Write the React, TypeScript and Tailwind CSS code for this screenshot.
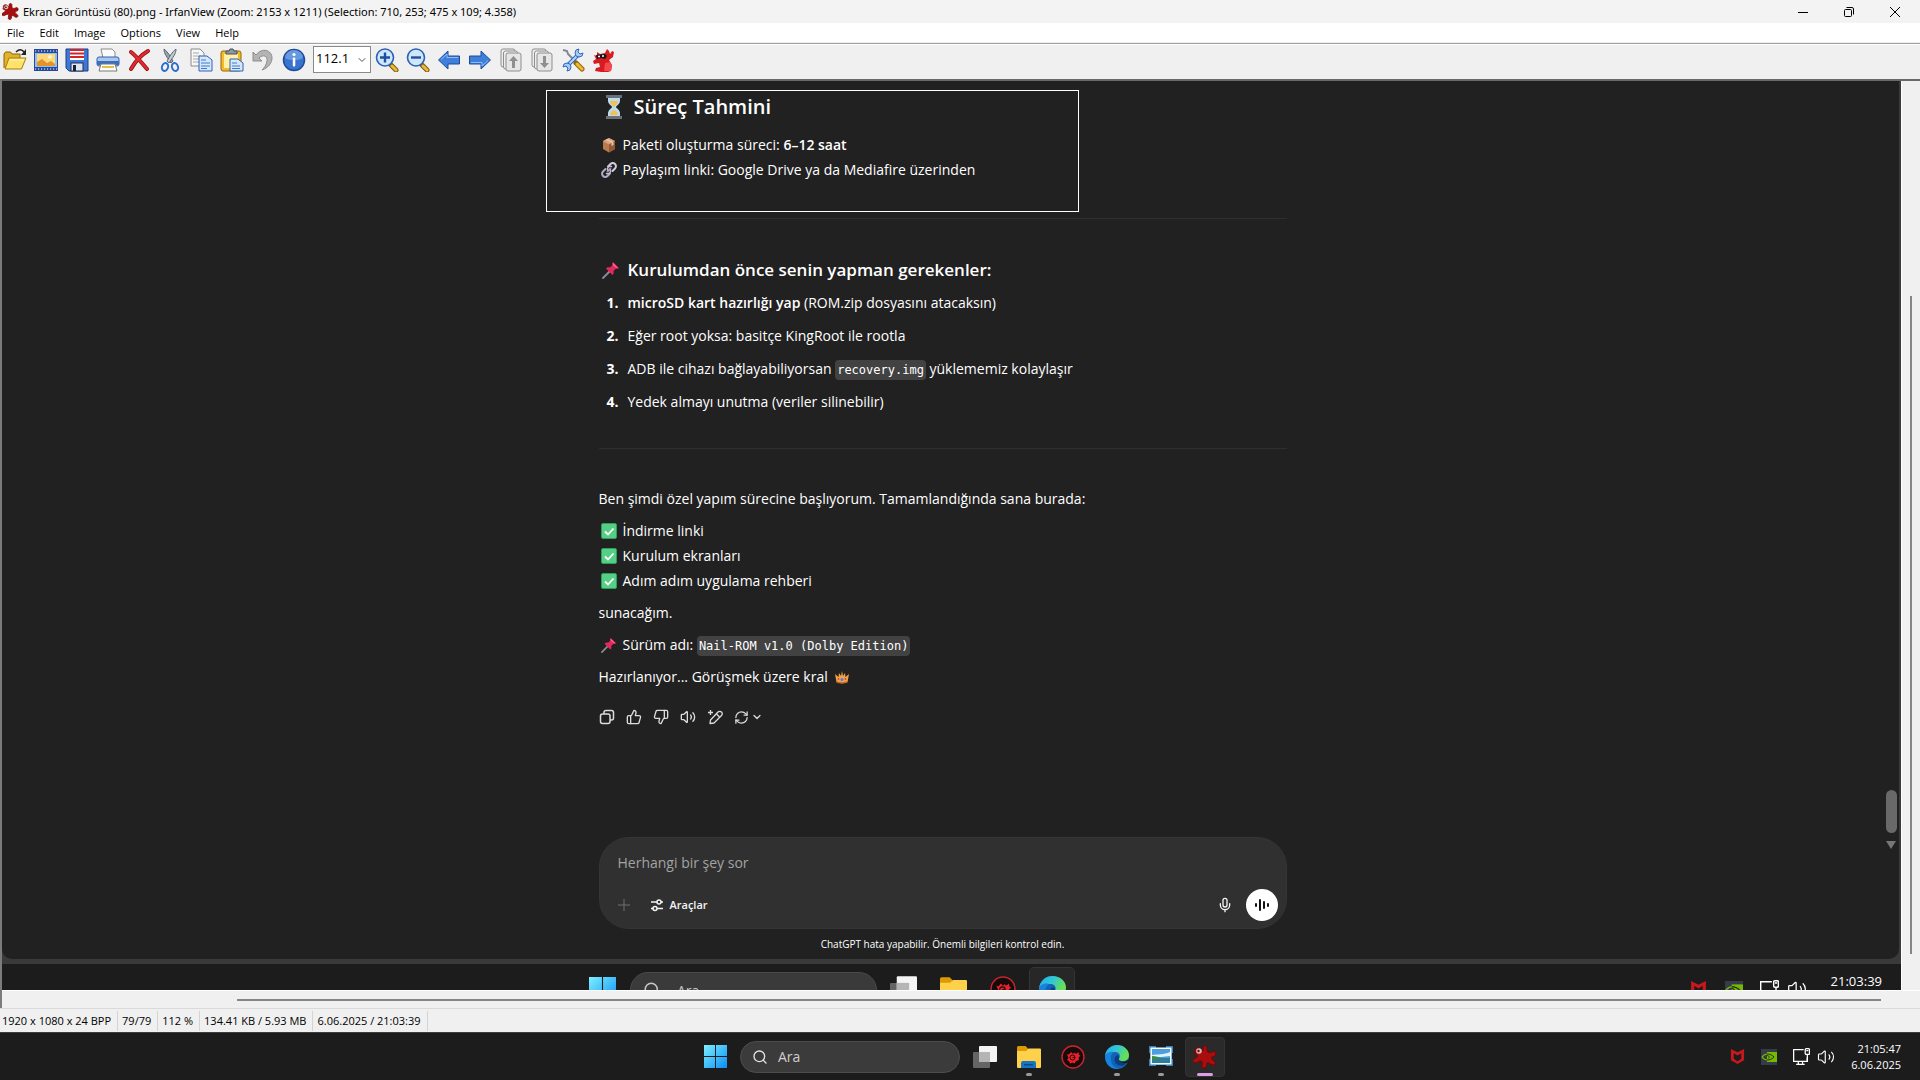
import React, { useId, useState } from 'react';
import { ChevronDown, Mic, RefreshCw, Search, ThumbsDown, ThumbsUp, Volume2 } from 'lucide-react';

/* ---------- toolbar icons ---------- */

const OpenIcon = () => (
  <svg viewBox="0 0 24 24" className="h-6 w-6">
    <path d="M1 20V6l1.500-2h5L9 6h8v4" fill="#e2b22c" stroke="#8a6508" />
    <path d="M2 21 6 10h17l-4.500 11z" fill="#ffe26b" stroke="#a67c0a" />
    <path d="M7 12h14" stroke="#fff6c2" />
    <path d="M13 4c3-3 6-3 8 0" fill="none" stroke="#222" strokeWidth="1.500" />
    <path d="M23 1v6h-5z" fill="#222" />
  </svg>
);

const SlideshowIcon = () => (
  <svg viewBox="0 0 24 24" className="h-6 w-6">
    <rect x="0" y="1" width="24" height="22" fill="#26479a" />
    <path d="M1 3h23M1 21h23" stroke="#fff" strokeWidth="1.200" strokeDasharray="1.200 1.800" />
    <rect x="1" y="5" width="22" height="14" fill="#8ec1ee" />
    <rect x="3" y="6" width="18" height="12" fill="#ffd77a" />
    <circle cx="16" cy="9" r="2" fill="#fff7c4" />
    <path d="M3 18v-4l5-3 5 4 4-2 4 3v2z" fill="#e0942a" />
  </svg>
);

const SaveIcon = () => (
  <svg viewBox="0 0 24 24" className="h-6 w-6">
    <path d="M1 1h22v22H4l-3-3z" fill="#3d78d4" stroke="#1d3f86" />
    <rect x="5" y="1" width="14" height="11" fill="#fff" />
    <path d="M5 2h14M5 5.500h14M5 9h14" stroke="#d3242c" strokeWidth="1.800" />
    <rect x="6" y="15" width="12" height="8" fill="#dfe5ee" stroke="#1c2f55" />
    <rect x="8" y="17" width="3" height="6" fill="#1c2233" />
  </svg>
);

const PrintIcon = () => (
  <svg viewBox="0 0 24 24" className="h-6 w-6">
    <path d="M7 10 5 1h11l3 3v6z" fill="#fafafa" stroke="#8b8b8b" />
    <rect x="1" y="9" width="22" height="9" rx="2" fill="#a9c7f1" stroke="#3563ac" />
    <path d="M1 13h22v4H1z" fill="#3b6fc0" />
    <path d="M5 16h14l2 7H3z" fill="#fff" stroke="#7a7a7a" />
    <path d="M6 19h12" stroke="#e2c04a" strokeWidth="2" />
  </svg>
);

const DeleteIcon = () => (
  <svg viewBox="0 0 24 24" className="h-6 w-6" fill="none" strokeLinecap="round">
    <path d="M4 4c5 4 11 11 16 17M21 3C14 7 8 14 4 21" stroke="#8f1014" strokeWidth="4" />
    <path d="M4 4c5 4 11 11 16 17M21 3C14 7 8 14 4 21" stroke="#e02a30" strokeWidth="2.500" />
  </svg>
);

const CutIcon = () => (
  <svg viewBox="0 0 24 24" className="h-6 w-6">
    <path d="M6 1c0 5 3 8 7 14l2-2C12 8 10 4 6 1z" fill="#9aa3ad" stroke="#5e6872" />
    <path d="M18 1c0 5-3 8-7 14l-2-2c3-5 5-9 9-12z" fill="#c2c9d0" stroke="#5e6872" />
    <ellipse cx="7" cy="19" rx="3" ry="4" fill="none" stroke="#2f6fd0" strokeWidth="2" transform="rotate(20 7 19)" />
    <ellipse cx="17" cy="19" rx="3" ry="4" fill="none" stroke="#2f6fd0" strokeWidth="2" transform="rotate(-20 17 19)" />
  </svg>
);

const CopyPagesIcon = () => (
  <svg viewBox="0 0 24 24" className="h-6 w-6">
    <path d="M2 1h9l4 4v13H2z" fill="#f7f7f7" stroke="#8a8a8a" />
    <path d="M4 5h6M4 8h8M4 11h8M4 14h8" stroke="#a8a8a8" />
    <path d="M10 8h8l5 4v11H10z" fill="#d6e7fb" stroke="#2c62b5" />
    <path d="M12 12h5M12 15h9M12 18h9M12 20.500h6" stroke="#3f7bd0" />
  </svg>
);

const PasteIcon = () => (
  <svg viewBox="0 0 24 24" className="h-6 w-6">
    <rect x="1" y="3" width="20" height="20" rx="2" fill="#f3b92f" stroke="#94690a" />
    <rect x="4" y="6" width="14" height="14" fill="#fff1a8" />
    <path d="M6 6V3h3l1-2h3l1 2h3v3z" fill="#8d98a5" stroke="#48515c" />
    <path d="M10 11h8l5 4v8H10z" fill="#d6e7fb" stroke="#2c62b5" />
    <path d="M12 15h5M12 18h8M12 20.500h8" stroke="#3f7bd0" />
  </svg>
);

const UndoIcon = () => (
  <svg viewBox="0 0 24 24" className="h-6 w-6">
    <path d="M2 4v9h9l-3-3c4-4 9-2 8 3-.500 4-3 7-5 9 6-2 10-7 10-12C21 2 11-1 5 7z" fill="#b4b4b4" stroke="#8c8c8c" />
  </svg>
);

const InfoIcon = () => (
  <svg viewBox="0 0 24 24" className="h-6 w-6">
    <circle cx="12" cy="12" r="10.500" fill="#3674cf" stroke="#1e4a96" strokeWidth="1.500" />
    <path d="M3 10a9 8 0 0 1 18 0c-5 3-13 3-18 0z" fill="#6699e0" />
    <circle cx="12" cy="6.500" r="1.600" fill="#fff" />
    <rect x="10.800" y="9.500" width="2.500" height="9" rx="1" fill="#fff" />
  </svg>
);

const ZoomIcon = ({ plus = false }: { plus?: boolean }) => (
  <svg viewBox="0 0 24 24" className="h-6 w-6">
    <path d="m16 17 5 5" stroke="#7a5b12" strokeWidth="5" strokeLinecap="round" />
    <path d="m17 18 4 4" stroke="#e9b93a" strokeWidth="3" strokeLinecap="round" />
    <circle cx="10" cy="9.500" r="8.500" fill="#cfe6fd" stroke="#2c62b5" strokeWidth="1.600" />
    <path d={plus ? 'M5 9.500h10M10 4.500v10' : 'M5 9.500h10'} stroke="#1d4f9f" strokeWidth="2.400" />
  </svg>
);

const ArrowIcon = ({ right = false }: { right?: boolean }) => (
  <svg viewBox="0 0 24 24" className={right ? 'h-6 w-6 rotate-180' : 'h-6 w-6'}>
    <path d="M1.500 12 11 3v5h11.500v8H11v5z" fill="#3f7fdc" stroke="#1f4a99" strokeLinejoin="round" />
    <path d="M4 11.500 10 6v3.500h11" fill="none" stroke="#8fbcf5" />
  </svg>
);

const PagesIcon = ({ down = false }: { down?: boolean }) => (
  <svg viewBox="0 0 24 24" className="h-6 w-6">
    <rect x="2" y="1" width="14" height="18" rx="2" fill="#eee" stroke="#8e8e8e" />
    <rect x="4.500" y="3" width="14" height="18" rx="2" fill="#eee" stroke="#8e8e8e" />
    <rect x="7" y="5" width="15" height="18" rx="2" fill="#e6e6e6" stroke="#8e8e8e" />
    <path d={down ? 'M14.500 20 10 15h3V8h3v7h3z' : 'M14.500 8 10 13h3v7h3v-7h3z'} fill="#8f8f8f" />
  </svg>
);

const ToolsIcon = () => (
  <svg viewBox="0 0 24 24" className="h-6 w-6">
    <path d="m2 2 4 1 1 3 9 9" fill="none" stroke="#7d8894" strokeWidth="2" />
    <path d="m15 15 6 6" stroke="#8c6510" strokeWidth="5" strokeLinecap="round" />
    <path d="m16 16 5 5" stroke="#f1b929" strokeWidth="3" strokeLinecap="round" />
    <path d="M5 19 18 6" stroke="#2f6bc0" strokeWidth="4" />
    <path d="M5 19 18 6" stroke="#b8d4f5" strokeWidth="2" />
    <path d="M22 5a4 4 0 1 1-4-4l-1 3 2 2zM2 19a4 4 0 1 1 4 4l1-3-2-2z" fill="#a9caf2" stroke="#2f6bc0" />
  </svg>
);

const RedCatIcon = () => (
  <svg viewBox="0 0 24 24" className="h-6 w-6">
    <path d="M5 4 8 6l5-1 2-4 2 2 1 3 2-3 2 1-1 5-4 3 3 5-1 6-3 1H9l-6-1 1-3 4-1-1-4-5 1-1-3 3-2-2-4 3 1z" fill="#d81b20" />
    <path d="m4 7 9-1 2 2-2 3-4-1-4 1z" fill="#15151b" />
    <circle cx="7" cy="8.500" r="1" fill="#fff" />
    <circle cx="11" cy="8" r="1" fill="#fff" />
    <path d="m13 15 5-1 2 4-1 5h-7z" fill="#f5484d" />
  </svg>
);

const SplatIcon = ({ className }: { className: string }) => (
  <svg viewBox="0 0 24 24" className={className}>
    <path
      d="M3 8C0 5 3 1 7 3l3 3V3c0-3 4-3 4 0v3c1 2 3 2 5 1 3-2 5 2 3 4l-3 1c-1 1 0 3 2 4 3 2 1 5-2 4-2-1-4-3-5-2-1 2 0 4-2 5s-4-1-3-3c1-3 0-4-2-4-2 1-5 3-7 1-1-2 1-3 3-4l2-2c0-1-3-2-4-3z"
      fill="#a90d0d"
      stroke="#6e0707"
    />
    <circle cx="6" cy="6" r="2.800" fill="#d9b9b9" />
    <circle cx="5.500" cy="6" r="1.200" fill="#541010" />
  </svg>
);

/* ---------- emoji ---------- */

const Hourglass = () => (
  <svg viewBox="0 0 20 24" className="h-6 w-5 shrink-0">
    <path d="M4 2h12v4c0 3-4 5-4 6s4 3 4 6v4H4v-4c0-3 4-5 4-6S4 9 4 6z" fill="#b9dcf2" />
    <path d="M6 6h8c0 3-3 4-3.500 6h-1C9 10 6 9 6 6zM10 15c3 1 4 3 4 5H6c0-2 1-4 4-5z" fill="#f6bf4f" />
    <path d="M2 0h16v3H2zM2 21h16v3H2z" fill="#68717c" />
  </svg>
);

const Package = () => (
  <svg viewBox="0 0 16 16" className="h-4 w-4 shrink-0">
    <path d="m8 1 6 3v8l-6 3.500L2 12V4z" fill="#b97a50" />
    <path d="m8 1 6 3-6 3.500L2 4z" fill="#d9a27a" />
    <path d="m8 7.500 6-3.500v8l-6 3.500z" fill="#94583a" />
    <path d="m4.500 2.800 6 3.200v3l2-1V5L6.500 1.800z" fill="#e6c4a0" />
  </svg>
);

const ChainLink = () => (
  <svg viewBox="0 0 16 16" className="h-4 w-4 shrink-0" fill="none" strokeWidth="2" strokeLinecap="round">
    <path d="m6.500 9.500 3-3" stroke="#8d8598" />
    <path d="M7 4.500 9.500 2a3 3 0 0 1 4.500 4.500L11.500 9" stroke="#d4cde0" />
    <path d="M9 11.500 6.500 14A3 3 0 0 1 2 9.500L4.500 7" stroke="#b3aac2" />
    <path d="M5.500 11.500c3 1 5-2 3.500-4M10.500 4.500c-3-1-5 2-3.500 4" stroke="#c4bcd2" strokeWidth="1.500" />
  </svg>
);

const Pin = ({ className }: { className: string }) => (
  <svg viewBox="0 0 18 18" className={className}>
    <path d="m1 17 7-7" stroke="#8f8a9c" strokeWidth="1.800" strokeLinecap="round" />
    <path d="m11 1 6 6c-1 1-2 1-3 .500L11.500 10c.500 2 0 3-1 4L4 7.500c1-1 2-1.500 4-1L10.500 4C10 3 10 2 11 1z" fill="#e2295f" />
    <path d="m11 2 5 5-2-.500-3-2.500z" fill="#ff7298" />
  </svg>
);

const CheckBox = () => (
  <svg viewBox="0 0 16 16" className="h-4 w-4 shrink-0">
    <rect x="0.500" y="0.500" width="15" height="15" rx="1.500" fill="#55cf86" stroke="#2f9d5c" />
    <path d="m4 8.500 3 3L12.500 5.500" fill="none" stroke="#fff" strokeWidth="1.800" />
  </svg>
);

const Crown = () => (
  <svg viewBox="0 0 16 14" className="h-[14px] w-4 shrink-0">
    <path d="m1 4 3.500 3L5 3l2 3 1-5 1 5 2-3 .500 4L15 4l-1.500 8c-3 1.500-8 1.500-11 0z" fill="#f2a444" />
    <path d="M2.500 11c3 1.500 8 1.500 11 0v1.500c-3 1.500-8 1.500-11 0z" fill="#c56a26" />
    <circle cx="8" cy="9.500" r="1.500" fill="#4a7ee8" />
    <circle cx="4.500" cy="9" r="1" fill="#e0405e" />
    <circle cx="11.500" cy="9" r="1" fill="#e0405e" />
  </svg>
);

/* ---------- chat icons ---------- */

const CopySquares = () => (
  <svg viewBox="0 0 16 16" className="h-4 w-4" fill="none" stroke="currentColor" strokeWidth="1.500">
    <rect x="1.500" y="5" width="9.500" height="9.500" rx="2" />
    <path d="M5 5V3.500a2 2 0 0 1 2-2h5.500a2 2 0 0 1 2 2V9a2 2 0 0 1-2 2H11" />
  </svg>
);

const MagicPen = () => (
  <svg viewBox="0 0 16 16" className="h-4 w-4" fill="none" stroke="currentColor" strokeWidth="1.300" strokeLinejoin="round">
    <path d="M3 14.500 3.500 11l7.500-8a2.300 2.300 0 0 1 3.500 3.500L7 14z" />
    <path d="m9.500 5 3 3M3.500 1v5M1 3.500h5" />
  </svg>
);

const Sliders = () => (
  <svg viewBox="0 0 14 14" className="h-[14px] w-[14px]" fill="none" stroke="currentColor" strokeWidth="1.500">
    <circle cx="9" cy="4" r="2" />
    <circle cx="5" cy="10.500" r="2" />
    <path d="M1 4h6M11 4h2M1 10.500h2M7 10.500h6" />
  </svg>
);

const Wave = () => (
  <svg viewBox="0 0 16 16" className="h-4 w-4" stroke="#111" strokeWidth="2" strokeLinecap="round">
    <path d="M2 7v2M6 3v10M10 5v6M14 7v2" />
  </svg>
);

/* ---------- taskbar icons ---------- */

const WindowsLogo = ({ className }: { className: string }) => {
  const id = useId();
  return (
    <svg viewBox="0 0 24 24" className={className}>
      <defs>
        <linearGradient id={id} x1="0" y1="0" x2="1" y2="1">
          <stop offset="0" stopColor="#7df0ff" />
          <stop offset="1" stopColor="#0a8cf5" />
        </linearGradient>
      </defs>
      <path d="M0 0h11.500v11.500H0zM12.500 0H24v11.500H12.500zM0 12.500h11.500V24H0zM12.500 12.500H24V24H12.500z" fill={`url(#${id})`} />
    </svg>
  );
};

const TaskView = ({ className }: { className: string }) => (
  <svg viewBox="0 0 24 24" className={className}>
    <rect x="0" y="7" width="17" height="16" rx="1" fill="#656565" />
    <rect x="6" y="1" width="18" height="16" rx="1" fill="#f4f4f4" />
    <rect x="6" y="7" width="11" height="10" fill="#b5b5b5" />
  </svg>
);

const Folder = ({ className }: { className: string }) => (
  <svg viewBox="0 0 24 24" className={className}>
    <path d="M0 2.500Q0 1 1.500 1h7L11 3.500V8H0z" fill="#dd9a06" />
    <path d="M0 6h9l2.500-2.500H23q1 0 1 1V22q0 1-1 1H1q-1 0-1-1z" fill="#ffd04a" />
    <path d="M4 23v-5q0-2 2-2h11q2 0 2 2v5z" fill="#1674c4" />
    <path d="M7 19h9v1.500H7z" fill="#0a4b8b" />
  </svg>
);

const RedBadge = ({ className }: { className: string }) => (
  <svg viewBox="0 0 24 24" className={className}>
    <circle cx="12" cy="12" r="11" fill="#150b0c" stroke="#c9252b" strokeWidth="1.400" />
    <path d="m6 9 2 .500L10 7l2 2 1.500-1.500L15 9l2.500-2 .500 3 1.500.500-2 2 .500 2.500-3 1-1.500 2.500-2-1-2.500 1-1-2.500-2-1 1.500-2z" fill="#ee2027" />
    <circle cx="11.500" cy="12.500" r="2.500" fill="none" stroke="#150b0c" />
    <path d="M11.500 12.500h2" stroke="#150b0c" />
  </svg>
);

const Edge = ({ className }: { className: string }) => {
  const id = useId();
  return (
    <svg viewBox="0 0 24 24" className={className}>
      <defs>
        <linearGradient id={id} x1="0" y1="0" x2="1" y2="0.400">
          <stop offset="0" stopColor="#2aa8ea" />
          <stop offset="0.500" stopColor="#31c6d6" />
          <stop offset="1" stopColor="#69e04f" />
        </linearGradient>
      </defs>
      <circle cx="12" cy="12" r="12" fill="#1262b8" />
      <path d="M0 11C1 4 6 0 12 0c7 0 12 5 12 10 0 4-3 6-6 6-3 0-5-1-4-2.500 2-3.500 0-6.500-4-6.500C5 7 1 9 0 11z" fill={`url(#${id})`} />
      <path d="M0 11c1-3 5-5 9-4-3 2-4 5-3 9 1 5 5 7 8 7.700C6 25 0 19 0 11z" fill="#1684dc" />
      <path d="M14 13.500c-1 3 3 5 8.500 3.500-1.500 2-3 3-4 3.500-5 1-9-2-9-6 0-2 1-4 3-4.500 2 1 2 2.500 1.500 3.500z" fill="#0b3f80" />
      <path d="M14 13.500c-1 3 4 5 10 1v4l-1-1c-5 2-10-1-9-4z" fill="#1c1c1c" />
    </svg>
  );
};

const PhotoViewer = ({ className }: { className: string }) => (
  <svg viewBox="0 0 24 24" className={className}>
    <path d="M0 1h7v2h10V1h7v7h-1v6h1v7h-7v-1H7v1H0v-7h1V8H0z" fill="#3482bd" />
    <rect x="1.500" y="2.500" width="21" height="17" fill="#f5fafc" />
    <rect x="3" y="4" width="18" height="14" fill="#4b9fe0" />
    <path d="M3 10c5-1 12 0 18-3v4L3 13z" fill="#dff3fb" />
    <path d="M3 12c4 0 7 1 18 1v5H3z" fill="#2d7f99" />
    <path d="M3 11c4 0 7 1 9 2l-9 2z" fill="#3d8c45" />
  </svg>
);

const McAfee = ({ className }: { className: string }) => (
  <svg viewBox="0 0 16 18" className={className}>
    <path d="m1 1 7 3.500L15 1v12l-7 4-7-4zM4 5.500v6L8 14l4-2.500v-6L8 8z" fill="#c8181e" fillRule="evenodd" />
  </svg>
);

const Nvidia = ({ className }: { className: string }) => (
  <svg viewBox="0 0 16 16" className={className}>
    <rect width="16" height="16" fill="#353b48" />
    <path d="M6 3h10v10H6z" fill="#76b900" />
    <path d="M1 8c3-4 8-4 12 0-4 4-9 4-12 0z" fill="none" stroke="#76b900" strokeWidth="1.200" />
    <path d="M6 5c3 0 5 1 7 3-2 2-4 3-7 3M6 6.500c2 0 3 2 1.500 3" fill="none" stroke="#253018" />
  </svg>
);

const Network = ({ className }: { className: string }) => (
  <svg viewBox="0 0 16 16" className={className} fill="none" stroke="#fff" strokeWidth="1.200">
    <path d="M10 1.500H.600v11h12.800V9M5 12.500V15M9 12.500V15M3 15.400h8" />
    <rect x="11.500" y="0.600" width="4" height="5.500" rx="1" />
    <path d="M13.500 6v7M12.500 2.500h2" />
  </svg>
);

const taskbarApps = [
  { name: 'Görev görünümü', Icon: TaskView, state: 'none' },
  { name: 'Dosya Gezgini', Icon: Folder, state: 'open' },
  { name: 'Oyun merkezi', Icon: RedBadge, state: 'none' },
  { name: 'Microsoft Edge', Icon: Edge, state: 'open' },
  { name: 'Fotoğraf Görüntüleyicisi', Icon: PhotoViewer, state: 'open' },
  { name: 'IrfanView', Icon: SplatIcon, state: 'active' },
];

const TitleBar = () => (
  <header className="flex h-[23px] shrink-0 items-center bg-[#f3f3f3] pl-[2px] pr-[2px]">
    <SplatIcon className="h-[17px] w-[17px]" />
    <h1 className="ml-1 flex-1 truncate font-['Noto_Sans','Open_Sans',sans-serif] text-[11px] leading-4">
      Ekran Görüntüsü (80).png - IrfanView (Zoom: 2153 x 1211) (Selection: 710, 253; 475 x 109; 4.358)
    </h1>
    <button aria-label="Minimize" className="flex h-full w-[46px] items-center justify-center">
      <svg viewBox="0 0 10 10" className="h-[10px] w-[10px]" stroke="#000"><path d="M0 5.500h10" /></svg>
    </button>
    <button aria-label="Restore" className="flex h-full w-[46px] items-center justify-center">
      <svg viewBox="0 0 10 10" className="h-[10px] w-[10px]" fill="none" stroke="#000">
        <rect x="0.500" y="2.500" width="7" height="7" rx="1" />
        <path d="M2.500.500H8A1.500 1.500 0 0 1 9.500 2v5.500" />
      </svg>
    </button>
    <button aria-label="Close" className="flex h-full w-[46px] items-center justify-center">
      <svg viewBox="0 0 10 10" className="h-[10px] w-[10px]" stroke="#000"><path d="m0 0 10 10M10 0 0 10" /></svg>
    </button>
  </header>
);

const ToolButton = ({ label, children }: { label: string; children: React.ReactNode }) => (
  <button aria-label={label} className="h-6 w-6">{children}</button>
);

const Toolbar = () => {
  const [zoom, setZoom] = useState('112.1');
  return (
    <div className="flex h-[34px] shrink-0 items-center bg-[#f0f0f0] pl-[3px] pb-[5px]">
      <div className="flex gap-[7px]">
        <ToolButton label="Open"><OpenIcon /></ToolButton>
        <ToolButton label="Slideshow"><SlideshowIcon /></ToolButton>
        <ToolButton label="Save"><SaveIcon /></ToolButton>
        <ToolButton label="Print"><PrintIcon /></ToolButton>
        <ToolButton label="Delete"><DeleteIcon /></ToolButton>
        <ToolButton label="Cut"><CutIcon /></ToolButton>
        <ToolButton label="Copy"><CopyPagesIcon /></ToolButton>
        <ToolButton label="Paste"><PasteIcon /></ToolButton>
        <ToolButton label="Undo"><UndoIcon /></ToolButton>
        <ToolButton label="Information"><InfoIcon /></ToolButton>
      </div>
      <div className="ml-[7px] mr-1 flex h-[27px] w-[58px] items-center border border-[#8a8a8a] bg-white">
        <input
          aria-label="Zoom"
          value={zoom}
          onChange={e => setZoom(e.target.value)}
          className="mb-1 w-9 pl-[2px] text-[13px] leading-5 outline-none"
        />
        <ChevronDown className="ml-[6px] h-3 w-3 text-[#555]" strokeWidth={2} />
      </div>
      <div className="flex gap-[7px]">
        <ToolButton label="Zoom in"><ZoomIcon plus /></ToolButton>
        <ToolButton label="Zoom out"><ZoomIcon /></ToolButton>
        <ToolButton label="Previous file"><ArrowIcon /></ToolButton>
        <ToolButton label="Next file"><ArrowIcon right /></ToolButton>
        <ToolButton label="Previous page"><PagesIcon /></ToolButton>
        <ToolButton label="Next page"><PagesIcon down /></ToolButton>
        <ToolButton label="Settings"><ToolsIcon /></ToolButton>
        <ToolButton label="About"><RedCatIcon /></ToolButton>
      </div>
    </div>
  );
};

const Code = ({ children }: { children: React.ReactNode }) => (
  <code className="rounded-[4px] bg-[#424242] px-[2px] py-[3px] font-['DejaVu_Sans_Mono','Liberation_Mono',monospace] text-[12px] leading-none">
    {children}
  </code>
);

const steps = [
  <><strong className="font-semibold">microSD kart hazırlığı yap</strong> (ROM.zip dosyasını atacaksın)</>,
  <>Eğer root yoksa: basitçe KingRoot ile rootla</>,
  <>ADB ile cihazı bağlayabiliyorsan <Code>recovery.img</Code> yüklememiz kolaylaşır</>,
  <>Yedek almayı unutma (veriler silinebilir)</>,
];

const Message = () => (
  <article className="pt-[13px] text-[14px] leading-[25px]">
    <h2 className="flex items-center gap-[10px] pl-[5px] text-[20px] font-semibold leading-[26px]">
      <Hourglass /> Süreç Tahmini
    </h2>
    <p className="mt-3 flex items-center gap-[6px] pl-[2px]">
      <Package /> <span>Paketi oluşturma süreci: <strong className="font-semibold">6–12 saat</strong></span>
    </p>
    <p className="flex items-center gap-[6px] pl-[2px]">
      <ChainLink /> Paylaşım linki: Google Drive ya da Mediafire üzerinden
    </p>
    <hr className="mt-9 border-[#2f2f2f]" />

    <h3 className="mt-[38px] flex items-center gap-2 pl-[3px] text-[17px] font-semibold leading-[26px]">
      <Pin className="h-[18px] w-[18px] shrink-0" /> Kurulumdan önce senin yapman gerekenler:
    </h3>
    <ol className="mt-[7px] flex flex-col gap-2">
      {steps.map((step, i) => (
        <li key={i} className="flex">
          <span className="w-[29px] pl-2 font-bold">{i + 1}.</span>
          <span>{step}</span>
        </li>
      ))}
    </ol>
    <hr className="mt-[34px] border-[#2f2f2f]" />

    <div className="mt-[37px] flex flex-col gap-[7px]">
      <p>Ben şimdi özel yapım sürecine başlıyorum. Tamamlandığında sana burada:</p>
      <ul>
        {['İndirme linki', 'Kurulum ekranları', 'Adım adım uygulama rehberi'].map(item => (
          <li key={item} className="flex items-center gap-[6px] pl-[2px]"><CheckBox /> {item}</li>
        ))}
      </ul>
      <p>sunacağım.</p>
      <p className="flex items-center gap-[6px] pl-[2px]">
        <Pin className="h-4 w-4 shrink-0" /> <span>Sürüm adı: <Code>Nail-ROM v1.0 (Dolby Edition)</Code></span>
      </p>
      <p className="flex items-center gap-[6px]">Hazırlanıyor... Görüşmek üzere kral <Crown /></p>
    </div>

    <div className="mt-5 flex items-center gap-[11px] text-[#dcdcdc]">
      <button aria-label="Kopyala"><CopySquares /></button>
      <button aria-label="İyi yanıt"><ThumbsUp className="h-4 w-4" strokeWidth={2} /></button>
      <button aria-label="Kötü yanıt"><ThumbsDown className="h-4 w-4" strokeWidth={2} /></button>
      <button aria-label="Sesli oku"><Volume2 className="h-4 w-4" strokeWidth={2} /></button>
      <button aria-label="Düzenle"><MagicPen /></button>
      <button aria-label="Yeniden dene" className="flex items-center gap-[2px]">
        <RefreshCw className="h-[15px] w-[15px]" strokeWidth={2} />
        <ChevronDown className="h-3 w-3" strokeWidth={2.5} />
      </button>
    </div>
  </article>
);

const Composer = () => {
  const [text, setText] = useState('');
  return (
    <div className="mt-auto">
      <form className="rounded-[30px] border border-[#353535] bg-[#303030] px-[18px] pb-[7px] pt-[13px]" onSubmit={e => e.preventDefault()}>
        <input
          aria-label="Mesaj"
          placeholder="Herhangi bir şey sor"
          value={text}
          onChange={e => setText(e.target.value)}
          className="block w-full bg-transparent text-[14px] leading-6 outline-none placeholder:text-[#a3a3a3]"
        />
        <div className="mt-[14px] flex items-center text-[#f3f3f3]">
          <button type="button" aria-label="Ekle" className="text-[#6e6e6e]">
            <svg viewBox="0 0 12 12" className="h-3 w-3" stroke="currentColor"><path d="M6 0v12M0 6h12" /></svg>
          </button>
          <button type="button" className="ml-5 flex items-center gap-[6px] text-[11px] font-semibold leading-4">
            <Sliders /> Araçlar
          </button>
          <button type="button" aria-label="Dikte" className="ml-auto mr-[13px]"><Mic className="h-4 w-4" strokeWidth={2} /></button>
          <button type="button" aria-label="Ses modu" className="-mr-[10px] flex h-8 w-8 items-center justify-center rounded-full bg-white">
            <Wave />
          </button>
        </div>
      </form>
      <p className="py-[7px] text-center text-[10px] leading-4 text-white">
        ChatGPT hata yapabilir. Önemli bilgileri kontrol edin.
      </p>
    </div>
  );
};

/* desktop capture shown inside the viewer */
const ImageView = () => (
  <section className="flex min-w-0 flex-1 flex-col overflow-hidden bg-[#3a3a3a] text-white">
    <div className="relative mr-[2px] flex min-h-0 flex-1 rounded-b-[10px] bg-[#212121]">
      <div className="flex flex-1 justify-center">
        <div className="flex w-[688px] flex-col">
          <Message />
          <Composer />
        </div>
      </div>
      <div className="flex w-4 flex-col items-center justify-end pb-[110px]">
        <div className="h-[43px] w-[11px] rounded-full bg-[#696969]" />
        <svg viewBox="0 0 10 8" className="mt-2 h-2 w-[10px]"><path d="M0 0h10L5 8z" fill="#777" /></svg>
      </div>
      <div className="pointer-events-none absolute left-[544px] top-[9px] h-[122px] w-[533px] border border-white" />
    </div>
    <div className="mt-[5px] flex h-[26px] shrink-0 items-start overflow-hidden bg-[#1c1c1c]">
      <div className="ml-[576px] flex">
        <div className="mt-[13px] flex w-[52px] justify-center pr-1"><WindowsLogo className="h-[27px] w-[27px]" /></div>
        <div className="mt-2 flex h-9 w-[247px] items-center gap-4 rounded-full border border-[#4a4a4a] bg-[#3a3a3a] pl-3 text-[14px] text-[#c8c8c8]">
          <Search className="h-[18px] w-[18px]" /> Ara
        </div>
        <div className="mt-[11px] flex w-[52px] justify-center"><TaskView className="h-[27px] w-[27px]" /></div>
        <div className="mt-[12px] flex w-[49px] justify-center"><Folder className="h-[27px] w-[27px]" /></div>
        <div className="mt-[12px] flex w-[49px] justify-center"><RedBadge className="h-[26px] w-[26px]" /></div>
        <div className="ml-[2px] mt-[3px] flex h-11 w-[46px] justify-center rounded-[5px] border border-[#343434] bg-[#272727] pt-2"><Edge className="h-[27px] w-[27px]" /></div>
      </div>
      <div className="ml-auto flex pr-[19px]">
        <McAfee className="mt-[16px] h-[19px] w-[17px]" />
        <Nvidia className="ml-[18px] mt-[17px] h-[18px] w-[18px]" />
        <Network className="ml-[17px] mt-[16px] h-[19px] w-[19px]" />
        <Volume2 className="ml-2 mt-[15px] h-5 w-5" strokeWidth={1.5} />
        <span className="ml-6 mt-2 text-[13px] leading-[18px]">21:03:39</span>
      </div>
    </div>
  </section>
);

const StatusBar = () => (
  <footer className="flex h-6 shrink-0 items-center border-t border-[#d9d9d9] bg-[#f0f0f0] pt-px text-[11px] leading-5">
    {['1920 x 1080 x 24 BPP', '79/79', '112 %', '134.41 KB / 5.93 MB', '6.06.2025 / 21:03:39'].map((item, i) => (
      <span key={item} className={i === 0 ? 'border-r border-[#d4d4d4] pl-[2px] pr-[6px]' : 'border-r border-[#d4d4d4] pl-1 pr-[6px]'}>
        {item}
      </span>
    ))}
  </footer>
);

const Taskbar = () => (
  <nav className="grid h-12 shrink-0 grid-cols-[1fr_auto_1fr] items-center border-t border-[#3d3d3d] bg-[#1c1c1c] text-white">
    <div />
    <div className="flex items-center">
      <button aria-label="Başlat" className="flex h-10 w-11 items-center justify-center"><WindowsLogo className="h-[23px] w-[23px]" /></button>
      <label className="mx-[3px] flex h-8 w-[220px] items-center gap-[10px] rounded-full border border-[#4c4c4c] bg-[#3b3b3b] pl-[11px]">
        <Search className="h-4 w-4 text-[#e4e4e4]" strokeWidth={2} />
        <input aria-label="Ara" placeholder="Ara" className="w-[150px] bg-transparent text-[14px] leading-5 outline-none placeholder:text-[#cfcfcf]" />
      </label>
      {taskbarApps.map(({ name, Icon, state }) => (
        <button
          key={name}
          aria-label={name}
          className={`relative mx-[2px] flex h-10 w-10 items-center justify-center rounded-[4px] border ${state === 'active' ? 'border-[#333] bg-[#2a2a2a]' : 'border-transparent'}`}
        >
          <Icon className="h-6 w-6" />
          {state === 'open' && <span className="absolute bottom-0 h-[3px] w-[6px] rounded-full bg-[#9a9a9a]" />}
          {state === 'active' && <span className="absolute bottom-0 h-[3px] w-4 rounded-full bg-[#dba0e3]" />}
        </button>
      ))}
    </div>
    <div className="flex items-center justify-end pr-[19px]">
      <McAfee className="h-[17px] w-[15px]" />
      <Nvidia className="ml-4 h-4 w-4" />
      <Network className="ml-4 h-[17px] w-[17px]" />
      <Volume2 className="ml-[7px] h-[18px] w-[18px]" strokeWidth={1.5} />
      <time className="ml-4 text-right text-[11px] leading-4">21:05:47<br />6.06.2025</time>
    </div>
  </nav>
);

const App = () => (
  <div className="flex h-screen flex-col overflow-hidden bg-[#f0f0f0] font-['Open_Sans','Noto_Sans',sans-serif] text-black">
    <TitleBar />
    <nav className="flex h-[19px] shrink-0 items-center gap-[15px] bg-white pl-[7px] text-[11px] leading-4">
      {['File', 'Edit', 'Image', 'Options', 'View', 'Help'].map(item => (
        <button key={item}>{item}</button>
      ))}
    </nav>
    <div className="h-[3px] shrink-0 border-b border-t border-b-white border-t-[#f0f0f0] bg-[#a0a0a0]" />
    <Toolbar />
    <main className="flex min-h-0 flex-1 flex-col border-l-2 border-t-2 border-[#696969] border-l-[#7c7c7c]">
      <div className="flex min-h-0 flex-1">
        <ImageView />
        <div className="flex w-[19px] justify-center border-l border-white pb-9 pr-px pt-[215px]">
          <div className="w-[2px] bg-[#868686]" />
        </div>
      </div>
      <div className="flex h-[18px] shrink-0 items-center border-t border-white pl-[235px] pr-[39px]">
        <div className="h-[2px] w-full bg-[#868686]" />
      </div>
    </main>
    <StatusBar />
    <Taskbar />
  </div>
);

export default App;
